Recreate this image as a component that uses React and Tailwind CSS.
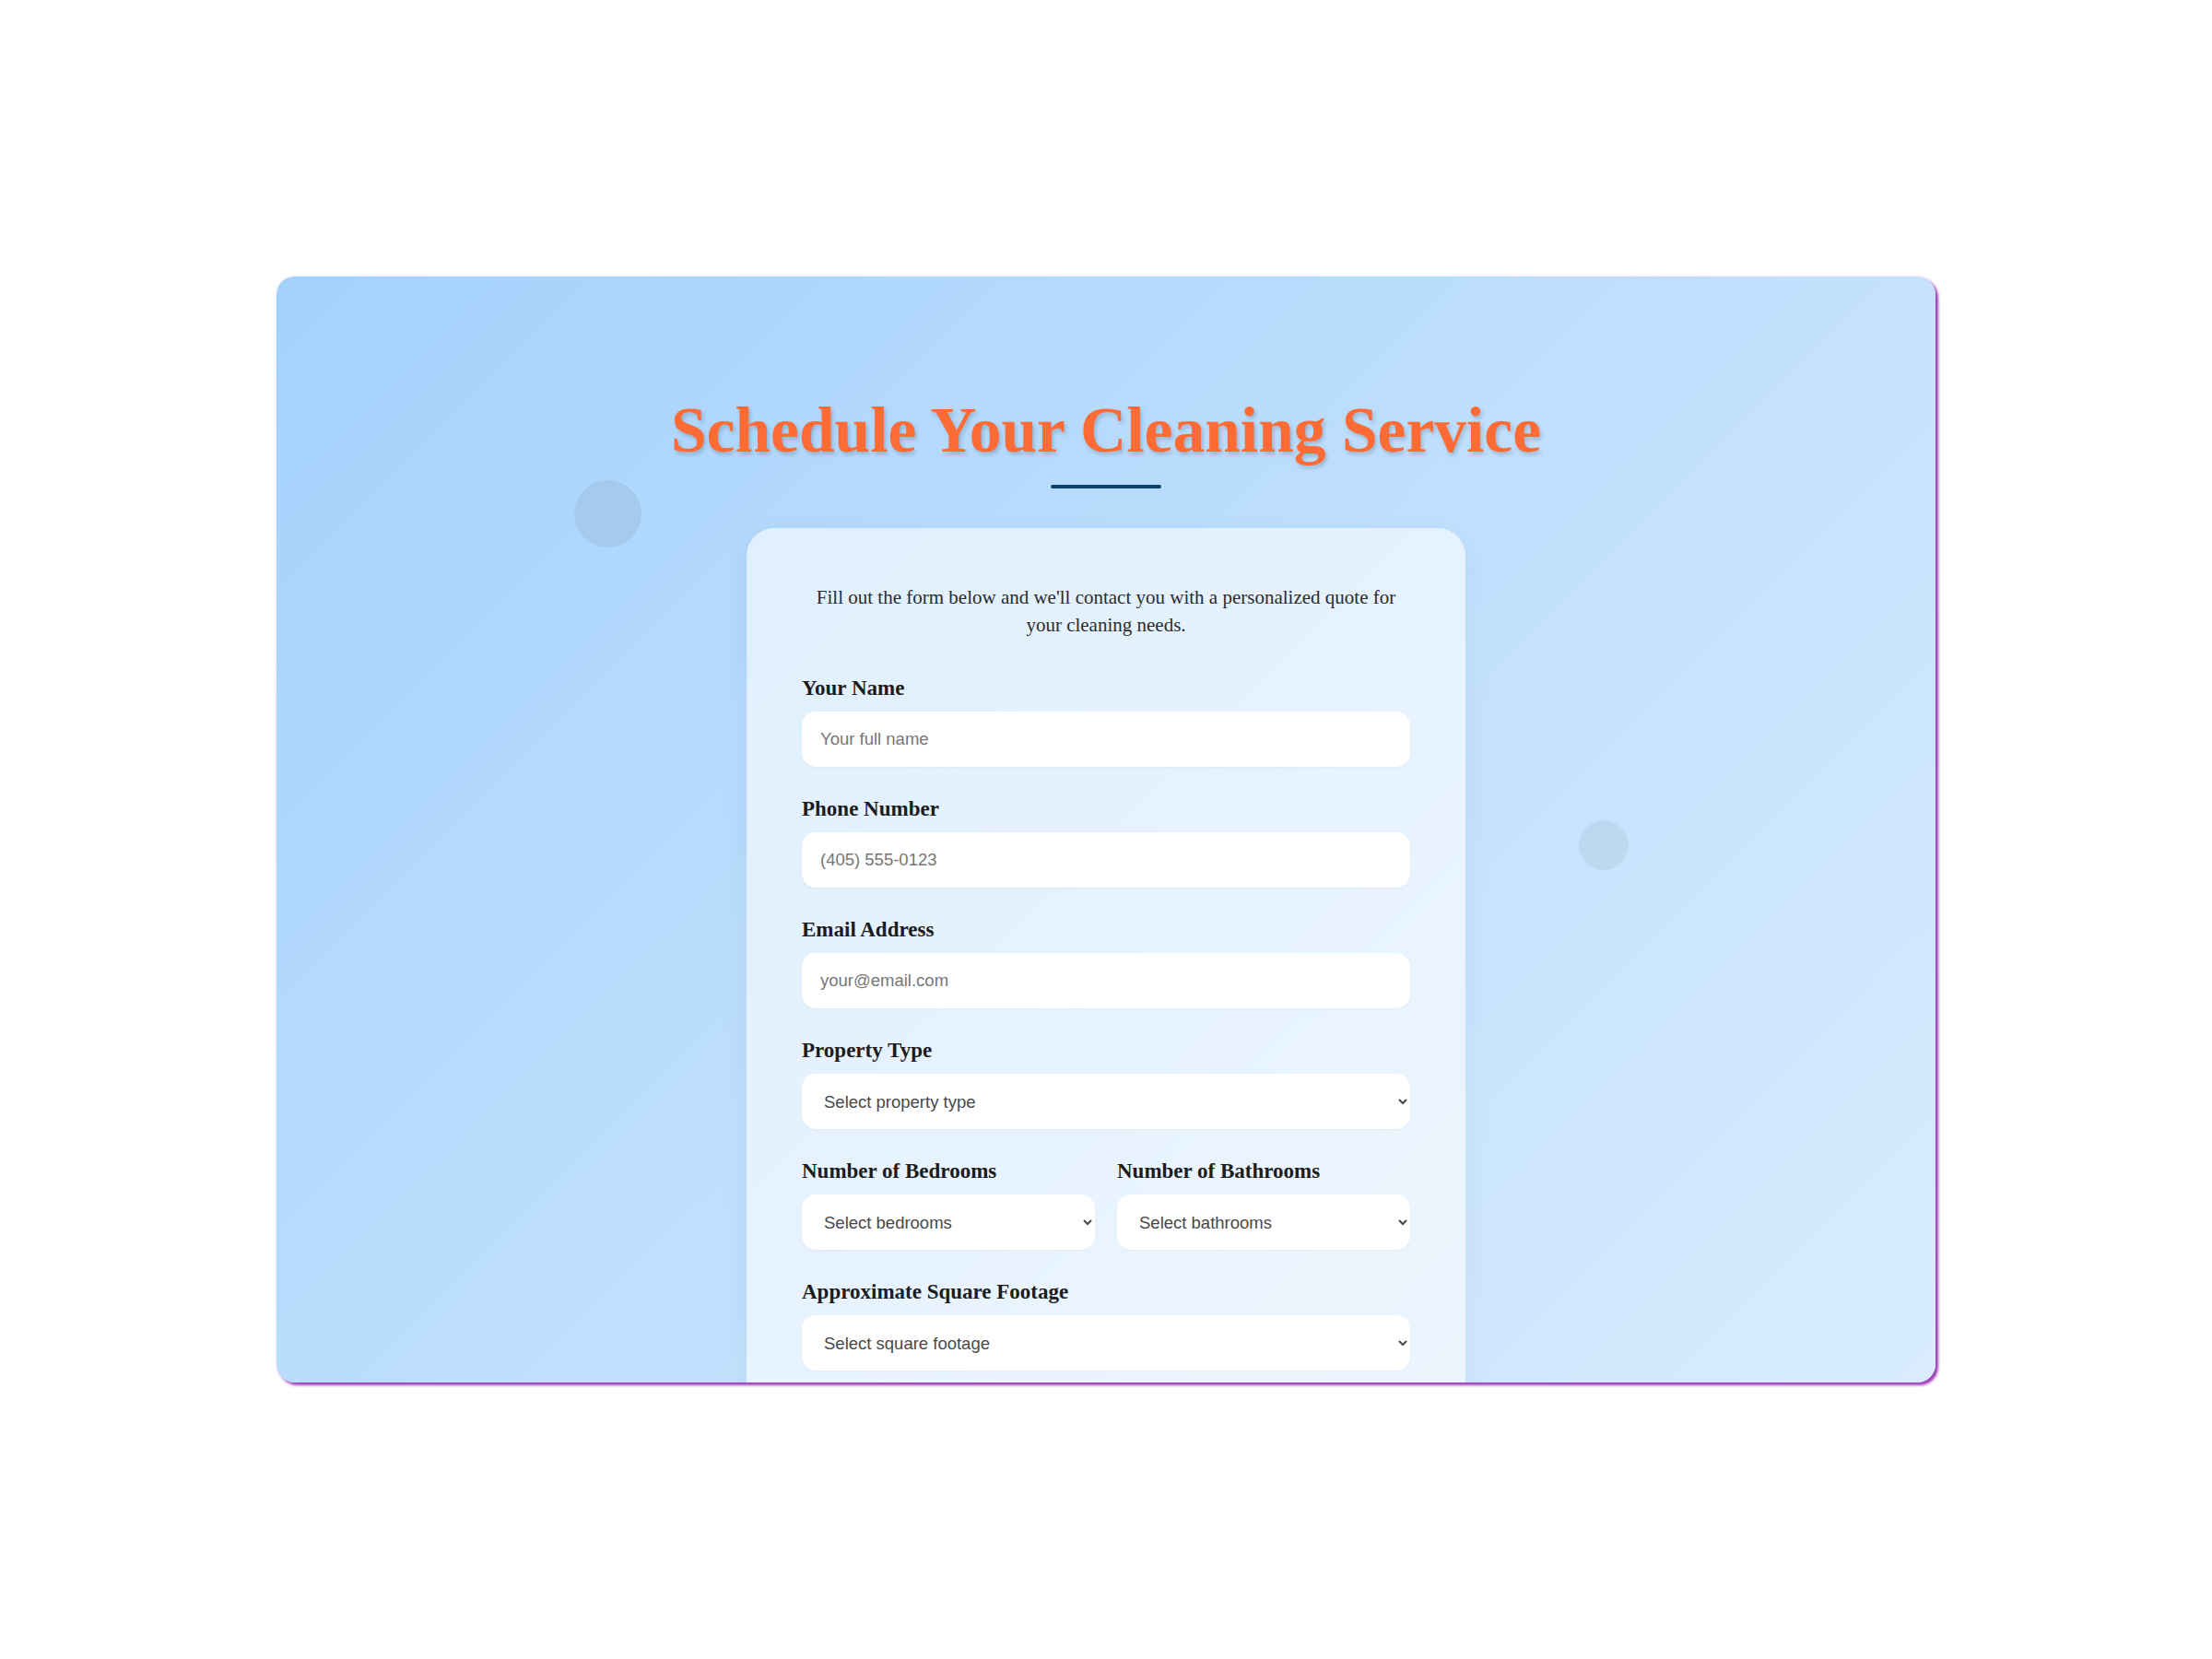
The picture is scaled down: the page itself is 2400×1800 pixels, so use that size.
import React, { useState } from 'react'

const serif = "font-['Liberation_Serif',_'Times_New_Roman',_serif]"
const sans = "font-['Liberation_Sans',_Arial,_sans-serif]"

const Field = ({ label, children }) => (
    <div className="mb-[35px]">
        <label className={`block mb-[14px] text-[23px] leading-[22px] font-bold text-[#1c1c1c] ${serif}`}>{label}</label>
        {children}
    </div>
)

const inputCls = `w-full h-[60px] px-[20px] bg-white rounded-[15px] text-[18.5px] text-[#333] placeholder:text-[#767676] outline-none shadow-[0_1px_3px_rgba(0,0,0,0.04)] ${sans}`
const selectCls = `w-full h-[60px] pl-[20px] pr-[14px] bg-white rounded-[15px] text-[18.5px] text-[#484848] outline-none shadow-[0_1px_3px_rgba(0,0,0,0.04)] ${sans}`

const App = () => {
    const [form, setForm] = useState({
        name: '',
        phone: '',
        email: '',
        property: '',
        bedrooms: '',
        bathrooms: '',
        footage: ''
    })

    const handleChange = (e) => {
        const { name, value } = e.target
        setForm(prev => ({ ...prev, [name]: value }))
    }

    return (
        <div className="w-full min-h-screen bg-white flex items-center justify-center">
            <div className="relative w-[1800px] h-[1200px] overflow-hidden rounded-[20px] bg-[linear-gradient(135deg,#a4d1fc_0%,#bfdffd_50%,#d8ecfe_100%)] shadow-[3px_3px_3px_rgba(140,30,170,0.85),0_0_2px_rgba(210,120,210,0.5)]">
                {/* decorative bubbles */}
                <div className="absolute left-[323px] top-[221px] w-[73px] h-[73px] rounded-full bg-black/[0.06]"></div>
                <div className="absolute left-[1413px] top-[590px] w-[54px] h-[54px] rounded-full bg-black/5"></div>

                <div className="relative pt-[127px] flex flex-col items-center">
                    <h1 className={`text-[69.5px] leading-[80px] font-bold text-[#ff6b35] [text-shadow:2px_3px_4px_rgba(0,0,0,0.18)] ${serif}`}>
                        Schedule Your Cleaning Service
                    </h1>
                    <div className="mt-[19px] w-[120px] h-[4px] rounded-full bg-[#0b4468]"></div>

                    <div className="mt-[43px] w-[780px] px-[60px] pt-[60px] pb-[60px] rounded-[30px] bg-white/60 shadow-[0_8px_30px_rgba(0,0,0,0.05)]">
                        <p className={`mb-[43px] text-center text-[21px] leading-[30px] text-[#2b2b2b] ${serif}`}>
                            Fill out the form below and we'll contact you with a personalized quote for your cleaning needs.
                        </p>

                        <form onSubmit={e => e.preventDefault()}>
                            <Field label="Your Name">
                                <input name="name" value={form.name} onChange={handleChange} placeholder="Your full name" className={inputCls} />
                            </Field>
                            <Field label="Phone Number">
                                <input name="phone" value={form.phone} onChange={handleChange} placeholder="(405) 555-0123" className={inputCls} />
                            </Field>
                            <Field label="Email Address">
                                <input name="email" type="email" value={form.email} onChange={handleChange} placeholder="your@email.com" className={inputCls} />
                            </Field>
                            <Field label="Property Type">
                                <select name="property" value={form.property} onChange={handleChange} className={selectCls}>
                                    <option value="">Select property type</option>
                                    <option value="house">House</option>
                                    <option value="apartment">Apartment</option>
                                    <option value="condo">Condo</option>
                                    <option value="office">Office</option>
                                </select>
                            </Field>
                            <div className="grid grid-cols-2 gap-[24px]">
                                <Field label="Number of Bedrooms">
                                    <select name="bedrooms" value={form.bedrooms} onChange={handleChange} className={selectCls}>
                                        <option value="">Select bedrooms</option>
                                        <option value="1">1</option>
                                        <option value="2">2</option>
                                        <option value="3">3</option>
                                        <option value="4">4+</option>
                                    </select>
                                </Field>
                                <Field label="Number of Bathrooms">
                                    <select name="bathrooms" value={form.bathrooms} onChange={handleChange} className={selectCls}>
                                        <option value="">Select bathrooms</option>
                                        <option value="1">1</option>
                                        <option value="2">2</option>
                                        <option value="3">3+</option>
                                    </select>
                                </Field>
                            </div>
                            <Field label="Approximate Square Footage">
                                <select name="footage" value={form.footage} onChange={handleChange} className={selectCls}>
                                    <option value="">Select square footage</option>
                                    <option value="s">Under 1,000 sq ft</option>
                                    <option value="m">1,000 - 2,000 sq ft</option>
                                    <option value="l">2,000 - 3,000 sq ft</option>
                                    <option value="xl">Over 3,000 sq ft</option>
                                </select>
                            </Field>
                        </form>
                    </div>
                </div>
            </div>
        </div>
    )
}

export default App
